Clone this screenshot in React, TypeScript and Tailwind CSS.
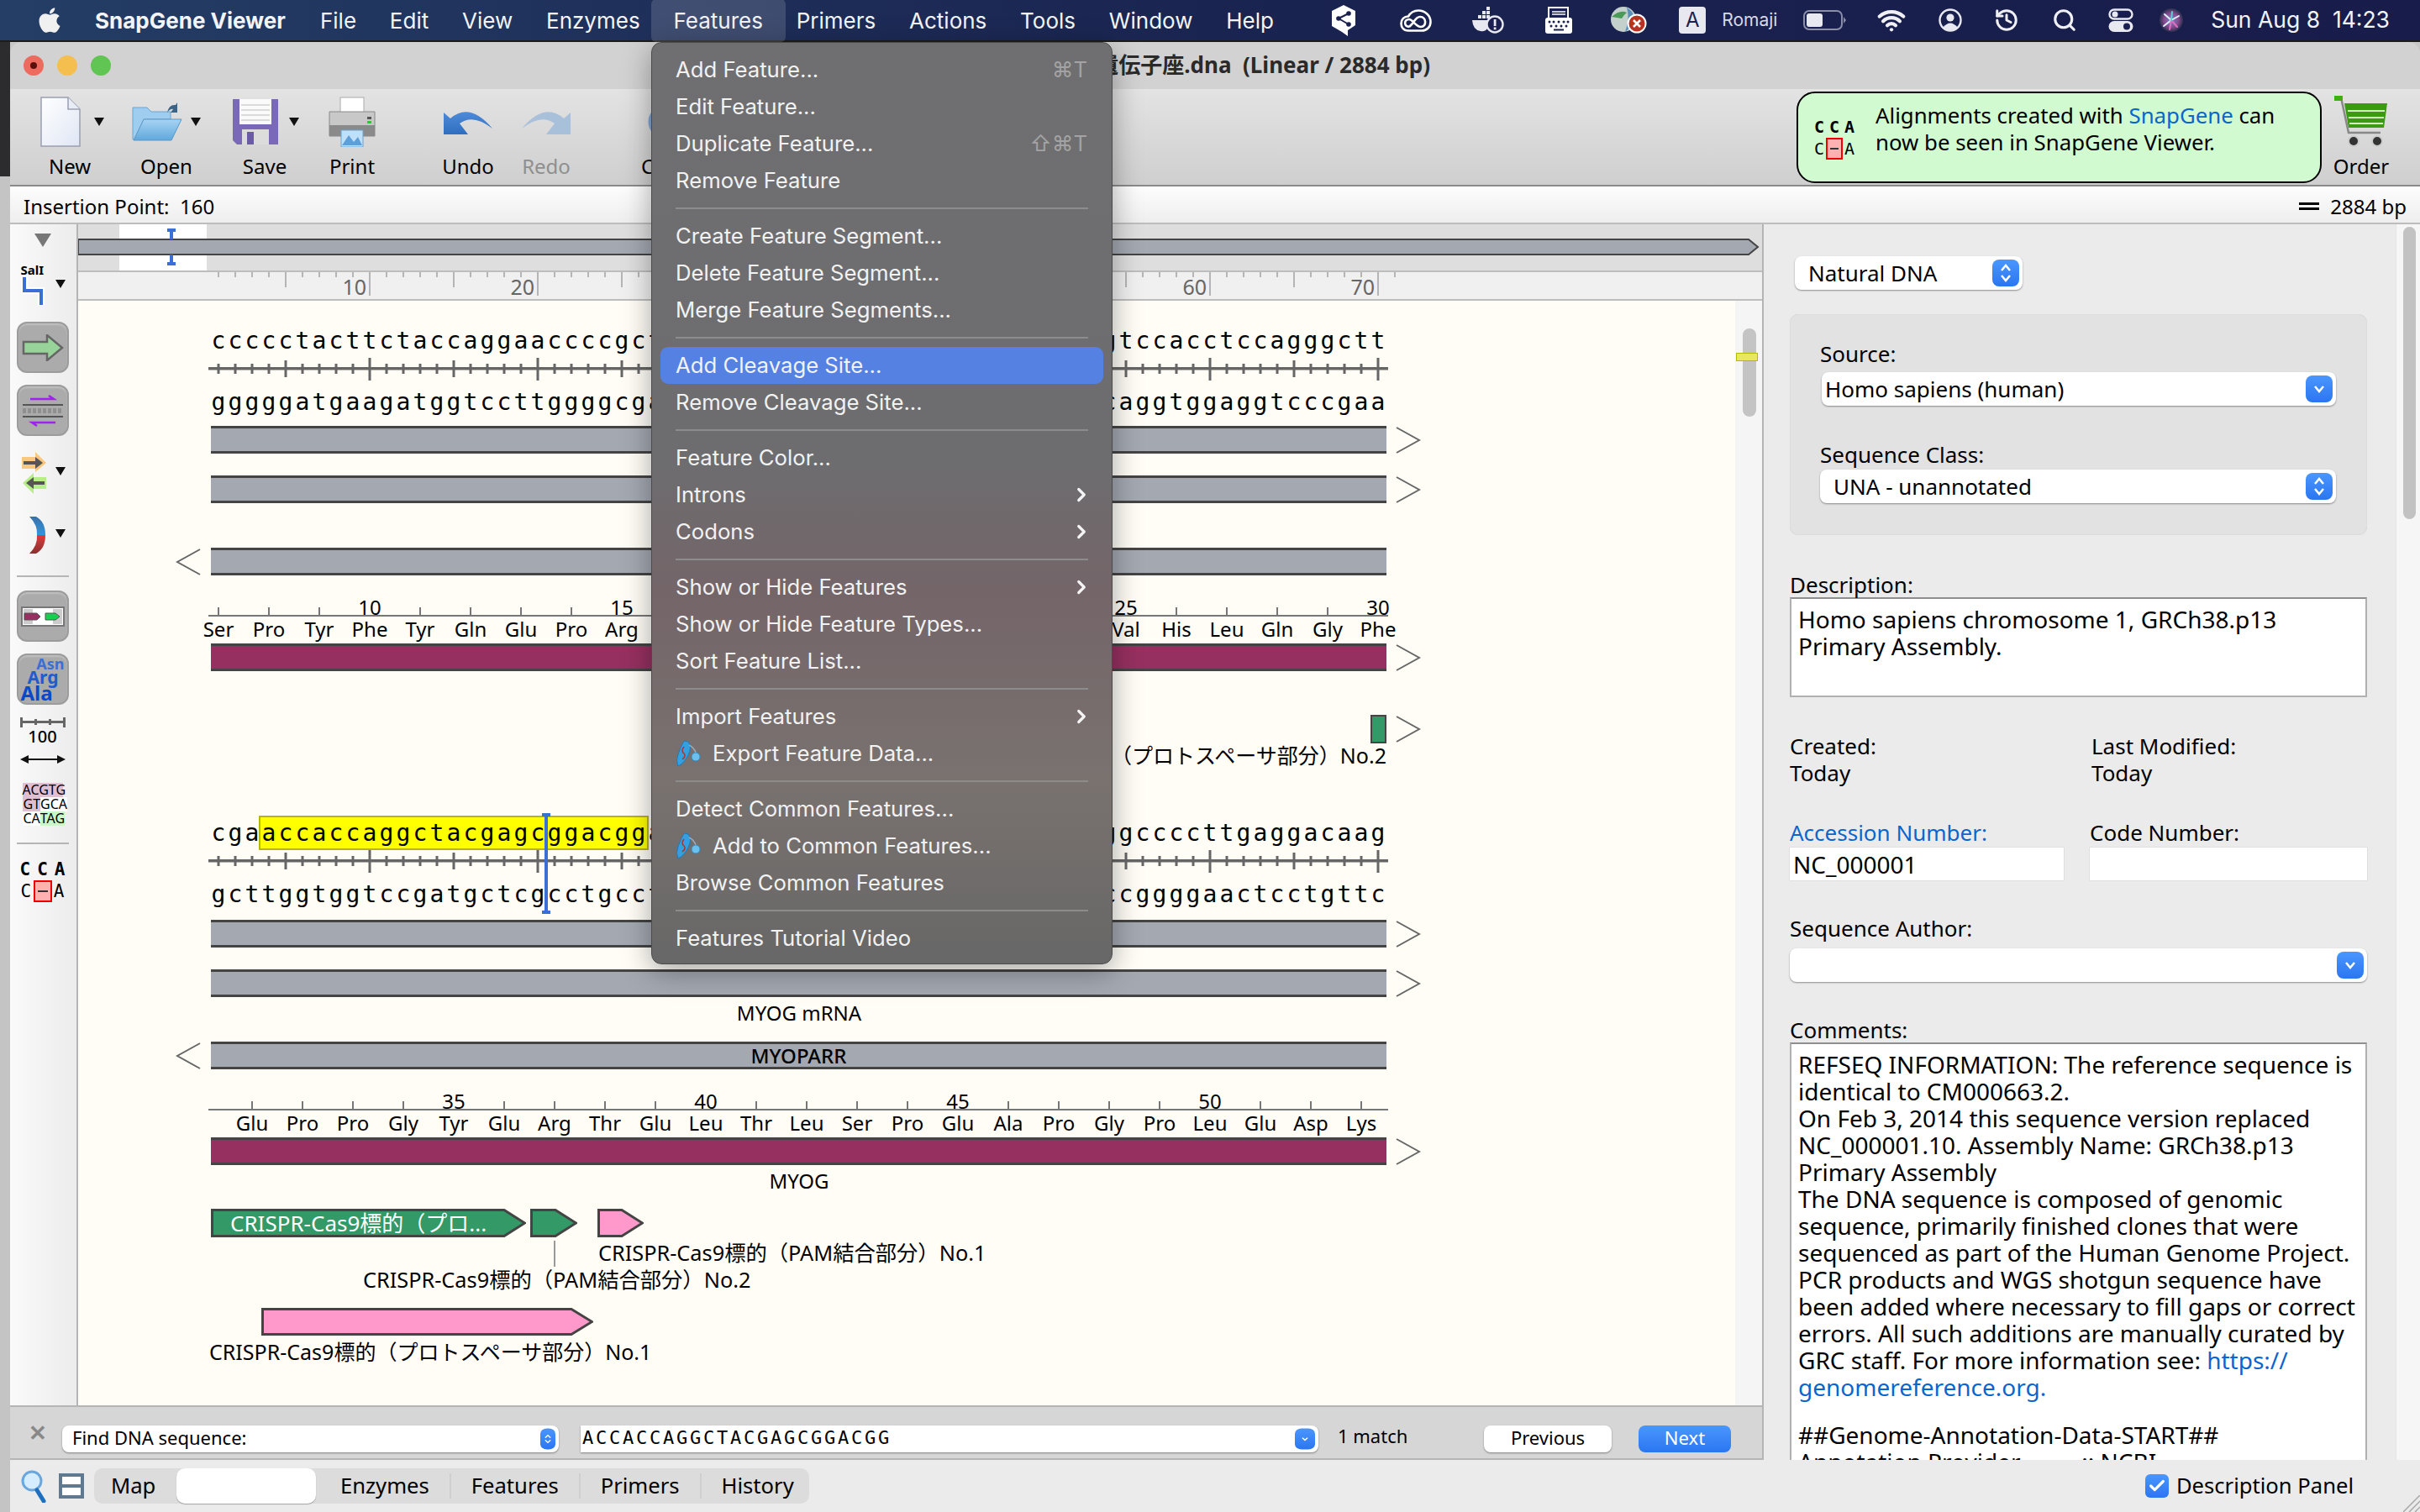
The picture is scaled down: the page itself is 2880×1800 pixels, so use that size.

import React from "react";
import { FaApple } from "react-icons/fa";
import { Wifi, Search, History, ChevronRight, Check } from "lucide-react";

const CELL = "w-[20px] text-center shrink-0";
const MONO = "font-['DejaVu_Sans_Mono','Liberation_Mono',monospace]";
const comp: Record<string, string> = { a: "t", t: "a", g: "c", c: "g" };
const complement = (s: string) => s.split("").map((c) => comp[c]).join("");

const TOP1 = "ccccctacttctaccaggaaccccgc" + "tgagctacctgcaaccgtccctatgcc" + "gtccacctccagggctt";
const TOP2 = "cgaaccaccaggctacgagcggacgg" + "agctgaagcgcaagaccaccaatgctg" + "ggccccttgaggacaag";

function Chars({ s }: { s: string }) {
  return (
    <>
      {s.split("").map((c, i) => (
        <span key={i} className={CELL}>{c}</span>
      ))}
    </>
  );
}

function SeqLine({ s, highlight }: { s: string; highlight?: boolean }) {
  if (highlight) {
    return (
      <div className={`flex h-[41px] items-center pl-[157px] text-[28px] text-black ${MONO}`}>
        <Chars s={s.slice(0, 3)} />
        <div className="-mx-[2px] flex h-[41px] items-center bg-[#ffff00] px-[2px] outline-2 -outline-offset-2 outline-[#b8b800]">
          <Chars s={s.slice(3, 26)} />
        </div>
        <Chars s={s.slice(26)} />
      </div>
    );
  }
  return (
    <div className={`flex h-[40px] items-center pl-[157px] text-[28px] text-black ${MONO}`}>
      <Chars s={s} />
    </div>
  );
}

function Ticks() {
  const items = Array.from({ length: 70 }, (_, i) => i + 1);
  return (
    <svg width="1404" height="28" className="ml-[155px] block">
      <rect x="0" y="11" width="1404" height="3.5" fill="#666" />
      {items.map((n) => {
        const x = 12 + (n - 1) * 20;
        const h = n % 10 === 0 ? 14 : n % 5 === 0 ? 10 : 6;
        return <rect key={n} x={x - 1.5} y={13 - h} width="3" height={h * 2} fill="#666" />;
      })}
    </svg>
  );
}

function Chev({ left, y = 32 }: { left?: boolean; y?: number }) {
  return (
    <svg width="30" height={y} viewBox={`0 0 30 ${y}`} className="shrink-0">
      {left ? (
        <polyline points={`29,1 2,${y / 2} 29,${y - 1}`} fill="none" stroke="#666" strokeWidth="2" />
      ) : (
        <polyline points={`1,1 28,${y / 2} 1,${y - 1}`} fill="none" stroke="#666" strokeWidth="2" />
      )}
    </svg>
  );
}

function Bar({
  color = "bg-[#a3a8b1]",
  left,
  right,
  label,
  className = "",
}: {
  color?: string;
  left?: boolean;
  right?: boolean;
  label?: string;
  className?: string;
}) {
  return (
    <div className={`flex h-[33px] items-center pl-[116px] ${className}`}>
      <div className="w-[30px] shrink-0">{left && <Chev left />}</div>
      <div className="w-[12px] shrink-0" />
      <div className={`flex h-[33px] w-[1399px] shrink-0 items-center justify-center border-y-[3px] border-[#444] text-[24px] font-medium text-black ${color}`}>
        {label}
      </div>
      <div className="w-[11px] shrink-0" />
      {right && <Chev />}
    </div>
  );
}

function AminoRow({ names, start, nums }: { names: string[]; start: number; nums: Record<number, string> }) {
  return (
    <div>
      <div className="h-[20px] w-[1404px] ml-[155px]">
        <svg width="1404" height="20" className="block">
          <rect x="0" y="18" width="1404" height="2" fill="#777" />
          {names.map((_, i) =>
            nums[start + i * 60] ? null : (
              <rect key={i} x={start + i * 60 - 248 - 1} y="9" width="2" height="10" fill="#777" />
            )
          )}
        </svg>
      </div>
      <div className="relative">
        {Object.entries(nums).map(([k, v]) => (
          <span key={k} className="absolute top-[-25px] w-[60px] text-center text-[24px] leading-[28px] text-black" style={{ left: Number(k) - 30 - 93 }}>
            {v}
          </span>
        ))}
      </div>
      <div className="flex h-[29px] items-center text-[24px] text-black" style={{ paddingLeft: start - 30 - 93 }}>
        {names.map((n, i) => (
          <span key={i} className="w-[60px] shrink-0 text-center">{n}</span>
        ))}
      </div>
    </div>
  );
}

function Caret({ className = "" }: { className?: string }) {
  return (
    <svg width="12" height="10" viewBox="0 0 12 10" className={className}>
      <polygon points="0,0 12,0 6,10" fill="#111" />
    </svg>
  );
}

function ToolItem({ label, icon, caret, muted, className = "" }: { label: string; icon: React.ReactNode; caret?: boolean; muted?: boolean; className?: string }) {
  return (
    <div className={`flex w-[86px] shrink-0 flex-col items-center ${className}`}>
      <div className="flex h-[62px] items-center justify-center">
        <div className="flex h-[62px] w-[60px] items-center justify-center">{icon}</div>
        {caret && <div className="flex w-[22px] justify-end"><Caret /></div>}
      </div>
      <div className={`mt-[7px] text-[24px] leading-[30px] ${muted ? "text-[#8f8f8f]" : "text-black"}`}>{label}</div>
    </div>
  );
}

function Cca({ big }: { big?: boolean }) {
  return big ? (
    <div className={`flex w-[56px] flex-col items-center text-[21px] leading-[26px] text-black ${MONO}`}>
      <div className="flex w-full justify-between px-[1px] font-bold"><span>C</span><span>C</span><span>A</span></div>
      <div className="flex w-full items-center justify-between">
        <span className="ml-[2px]">C</span>
        <span className="flex h-[26px] w-[22px] items-center justify-center border-2 border-[#f00000] bg-[#ffb0b0]"><span className="h-[2px] w-[12px] bg-[#333]" /></span>
        <span className="mr-[2px]">A</span>
      </div>
    </div>
  ) : (
    <div className={`flex w-[48px] flex-col items-center text-[20px] leading-[26px] text-black ${MONO}`}>
      <div className="flex w-full justify-between font-bold"><span>C</span><span>C</span><span>A</span></div>
      <div className="flex w-full items-center justify-between">
        <span>C</span>
        <span className="flex h-[26px] w-[20px] items-center justify-center border-2 border-[#f00000] bg-[#ffb0b0]"><span className="h-[2px] w-[10px] bg-[#333]" /></span>
        <span>A</span>
      </div>
    </div>
  );
}

function ToolButton({ children, className = "" }: { children: React.ReactNode; className?: string }) {
  return (
    <div className={`flex h-[61px] w-[62px] items-center justify-center rounded-[12px] border-2 border-[#9c9c9c] bg-[#ababab] shadow-[inset_0_2px_2px_rgba(255,255,255,0.25)] ${className}`}>
      {children}
    </div>
  );
}

function LeftTools() {
  return (
    <div className="flex w-[81px] shrink-0 flex-col items-center border-r-2 border-[#b4b4b4] bg-gradient-to-r from-[#fafafa] to-[#ececec] pr-[2px]">
      <svg width="20" height="16" viewBox="0 0 20 16" className="mt-[11px]"><polygon points="0,0 20,0 10,16" fill="#777" /></svg>
      <div className="relative mt-[20px] h-[50px] w-[62px]">
        <div className="ml-[5px] text-[15px] font-bold leading-[15px] text-black">SalI</div>
        <svg width="30" height="34" viewBox="0 0 30 34" className="ml-[5px] mt-[1px] block">
          <polyline points="4,0 4,16 24,16 24,34" fill="none" stroke="#fff" strokeWidth="8" />
          <polyline points="4,0 4,16 24,16 24,33" fill="none" stroke="#3b6fd6" strokeWidth="4" />
        </svg>
        <Caret className="absolute left-[46px] top-[19px]" />
      </div>
      <ToolButton className="mt-[19px]">
        <svg width="50" height="32" viewBox="0 0 50 32"><polygon points="2,9 30,9 30,1 48,16 30,31 30,23 2,23" fill="#98d49a" stroke="#666" strokeWidth="2.5" /></svg>
      </ToolButton>
      <ToolButton className="mt-[14px]">
        <svg width="50" height="40" viewBox="0 0 50 40">
          <path d="M10 6 H38 L32 2" fill="none" stroke="#a020f0" strokeWidth="2.5" />
          <path d="M40 34 H12 L18 38" fill="none" stroke="#a020f0" strokeWidth="2.5" />
          <rect x="1" y="12" width="48" height="2" fill="#555" />
          <rect x="1" y="26" width="48" height="2" fill="#555" />
          <line x1="1" y1="20" x2="49" y2="20" stroke="#8f8f8f" strokeWidth="6" strokeDasharray="4 2" />
        </svg>
      </ToolButton>
      <div className="relative mt-[19px] h-[50px] w-[62px]">
        <svg width="30" height="50" viewBox="0 0 30 50" className="ml-[6px]">
          <polygon points="0,6 16,6 16,0 29,13 16,24 16,20 0,20" fill="#f9c77e" />
          <polygon points="2,11 16,11 16,6 25,13 16,20 16,15 2,15" fill="#555" />
          <polygon points="29,30 14,30 14,25 1,37 14,50 14,44 29,44" fill="#b8ee8a" />
          <polygon points="27,35 14,35 14,30 5,37 14,44 14,39 27,39" fill="#555" />
        </svg>
        <Caret className="absolute left-[46px] top-[18px]" />
      </div>
      <div className="relative mt-[27px] h-[43px] w-[62px]">
        <svg width="22" height="44" viewBox="0 0 22 44" className="ml-[15px]">
          <defs>
            <linearGradient id="cb" x1="0" y1="0" x2="0" y2="1"><stop offset="0" stopColor="#3b6ea8" /><stop offset="1" stopColor="#2e97dc" /></linearGradient>
            <linearGradient id="cr" x1="0" y1="0" x2="0" y2="1"><stop offset="0" stopColor="#e03a3a" /><stop offset="1" stopColor="#8a2f2f" /></linearGradient>
          </defs>
          <path d="M0 0 H8 Q19 6 19 22 H9 Q10 10 0 0Z" fill="url(#cb)" />
          <path d="M9 22 H19 Q19 38 8 44 H0 Q10 34 9 22Z" fill="url(#cr)" />
        </svg>
        <Caret className="absolute left-[46px] top-[15px]" />
      </div>
      <div className="mt-[27px] h-[2px] w-[62px] bg-[#b5b5b5]" />
      <ToolButton className="mt-[16px] h-[60px]">
        <svg width="52" height="24" viewBox="0 0 52 24">
          <rect x="1" y="1" width="50" height="22" fill="#fff" stroke="#777" strokeWidth="2" />
          <rect x="3" y="3" width="11" height="18" fill="#ccc" /><rect x="38" y="3" width="11" height="18" fill="#ccc" />
          <polygon points="4,8 19,8 23,12 19,16 4,16" fill="#963060" stroke="#555" />
          <polygon points="29,8 41,8 46,12 41,16 29,16" fill="#18d050" stroke="#555" />
        </svg>
      </ToolButton>
      <ToolButton className="mt-[14px] h-[60px]">
        <div className="flex w-[52px] flex-col font-bold">
          <span className="self-end text-[18px] leading-[15px] text-[#3b6fd6]">Asn</span>
          <span className="ml-[8px] text-[21px] leading-[17px] text-[#1e5cd0]">Arg</span>
          <span className="text-[24px] leading-[20px] text-[#0a48cc]">Ala</span>
        </div>
      </ToolButton>
      <div className="mt-[15px] flex h-[34px] w-[62px] flex-col items-center">
        <svg width="54" height="12" viewBox="0 0 54 12">
          <rect x="0" y="4" width="54" height="3" fill="#666" />
          <rect x="0" y="0" width="3" height="12" fill="#666" /><rect x="51" y="0" width="3" height="12" fill="#666" />
          <rect x="17" y="2" width="3" height="7" fill="#666" /><rect x="34" y="2" width="3" height="7" fill="#666" />
        </svg>
        <span className="mt-[1px] text-[20px] font-medium leading-[20px] text-black">100</span>
      </div>
      <svg width="54" height="12" viewBox="0 0 54 12" className="mt-[10px]">
        <rect x="6" y="5" width="42" height="2" fill="#111" />
        <polygon points="0,6 10,1 10,11" fill="#111" /><polygon points="54,6 44,1 44,11" fill="#111" />
      </svg>
      <div className="mt-[22px] flex w-[48px] flex-col text-[16px] leading-[17px] text-black">
        <div className="bg-[#e0bfd2] text-center">ACGTG</div>
        <div className="flex"><span className="bg-[#e0bfd2] pl-[1px]">GT</span><span className="flex-1 bg-white text-center">GCA</span></div>
        <div className="flex"><span className="bg-white pl-[1px]">CA</span><span className="flex-1 bg-[#c8f8c8] text-center">TAG</span></div>
      </div>
      <div className="mt-[20px] h-[2px] w-[62px] bg-[#b5b5b5]" />
      <div className="mt-[17px]"><Cca big /></div>
    </div>
  );
}

function Overview() {
  return (
    <div className="relative h-[55px] shrink-0 bg-[#dedede]">
      <div className="absolute left-[49px] top-0 h-[55px] w-[104px] bg-white" />
      <svg width="2004" height="55" className="absolute left-0 top-0">
        <polygon points="0,18 1988,18 1999,27 1988,36 0,36" fill="#a3a8b1" stroke="#444" strokeWidth="2" />
        <path d="M106 7 H116 M111 7 V18 M111 36 V47 M106 47 H116" stroke="#3b6fd6" strokeWidth="4" fill="none" />
      </svg>
    </div>
  );
}

function Ruler() {
  const items = Array.from({ length: 71 }, (_, i) => i + 1);
  return (
    <div className="h-[36px] shrink-0 border-y-2 border-[#bdbdbd] bg-[#f0f0f0]">
      <svg width="2004" height="32" className="block">
        {items.map((n) => {
          const x = 260 + (n - 1) * 20 - 93;
          const h = n % 10 === 0 ? 28 : n % 5 === 0 ? 18 : 6;
          return <rect key={n} x={x - 1} y="0" width="2" height={h} fill="#b5b5b5" />;
        })}
        {[10, 20, 30, 40, 50, 60, 70].map((n) => (
          <text key={n} x={260 + (n - 1) * 20 - 93 - 4} y="27" textAnchor="end" fontSize="25" fill="#666" fontFamily="Noto Sans, sans-serif">{n}</text>
        ))}
      </svg>
    </div>
  );
}

function FeatureArrow({ w, h = 34, point, fill, children }: { w: number; h?: number; point: number; fill: string; children?: React.ReactNode }) {
  return (
    <div className="relative shrink-0" style={{ width: w, height: h }}>
      <svg width={w} height={h} className="block">
        <polygon points={`1.5,1.5 ${w - point},1.5 ${w - 1.5},${h / 2} ${w - point},${h - 1.5} 1.5,${h - 1.5}`} fill={fill} stroke="#444" strokeWidth="3" />
      </svg>
      {children}
    </div>
  );
}

function Canvas() {
  const aa1 = ["Ser", "Pro", "Tyr", "Phe", "Tyr", "Gln", "Glu", "Pro", "Arg", "Ile", "Thr", "Glu", "Leu", "Ala", "Gly", "Phe", "Leu", "Tyr", "Val", "His", "Leu", "Gln", "Gly", "Phe"];
  const aa2 = ["Glu", "Pro", "Pro", "Gly", "Tyr", "Glu", "Arg", "Thr", "Glu", "Leu", "Thr", "Leu", "Ser", "Pro", "Glu", "Ala", "Pro", "Gly", "Pro", "Leu", "Glu", "Asp", "Lys"];
  return (
    <div className="relative h-[1315px] w-[1972px] shrink-0 overflow-hidden bg-[#fffdf6]">
      {/* first block */}
      <div className="pt-[28px]">
        <SeqLine s={TOP1} />
        <Ticks />
        <div className="mt-[5px]"><SeqLine s={complement(TOP1)} /></div>
        <Bar right className="mt-[8px]" />
        <Bar right className="mt-[26px]" />
        <Bar left className="mt-[53px]" />
        <div className="mt-[29px]">
          <AminoRow names={aa1} start={260} nums={{ 440: "10", 740: "15", 1040: "20", 1340: "25", 1640: "30" }} />
        </div>
        <Bar color="bg-[#963060]" right className="mt-[3px]" />
        <div className="mt-[52px] flex h-[34px] items-center pl-[1538px]">
          <div className="h-[34px] w-[19px] border-2 border-[#444] bg-[#339966]" />
          <div className="ml-[11px]"><Chev /></div>
        </div>
        <div className="flex h-[30px] items-center justify-end pr-[415px] text-[25px] text-black">
          CRISPR-Cas9標的（プロトスペーサ部分）No.2
        </div>
      </div>
      {/* second block */}
      <div className="relative mt-[56px]">
        <SeqLine s={TOP2} highlight />
        <Ticks />
        <div className="mt-[5px]"><SeqLine s={complement(TOP2)} /></div>
        <svg width="10" height="120" className="absolute left-[552px] top-[-3px]">
          <path d="M0 2 H10 M5 2 V118 M0 118 H10" stroke="#3b6fd6" strokeWidth="4" fill="none" />
        </svg>
        <Bar right className="mt-[10px]" />
        <Bar right className="mt-[26px]" />
        <div className="flex h-[53px] items-center pb-[16px] pl-[758px] text-[24px] text-black">
          <span className="ml-[100px] -translate-x-1/2 whitespace-nowrap">MYOG mRNA</span>
        </div>
        <Bar left label="MYOPARR" />
        <div className="mt-[29px]">
          <AminoRow names={aa2} start={300} nums={{ 540: "35", 840: "40", 1140: "45", 1440: "50" }} />
        </div>
        <Bar color="bg-[#963060]" right className="mt-[3px]" />
        <div className="flex h-[38px] items-center pl-[758px] text-[24px] text-black">
          <span className="ml-[100px] -translate-x-1/2">MYOG</span>
        </div>
        {/* free annotated features */}
        <div className="relative mt-[14px] h-[190px]">
          <div className="absolute left-[158px] top-0"><FeatureArrow w={375} point={26} fill="#339966"><span className="absolute left-[23px] top-0 flex h-[34px] items-center text-[26px] whitespace-nowrap text-white">CRISPR-Cas9標的（プロ...</span></FeatureArrow></div>
          <div className="absolute left-[538px] top-0"><FeatureArrow w={56} point={26} fill="#339966" /></div>
          <div className="absolute left-[618px] top-0"><FeatureArrow w={55} point={26} fill="#ff99cc" /></div>
          <div className="absolute left-[619px] top-[36px] text-[25.3px] leading-[32px] whitespace-nowrap text-black">CRISPR-Cas9標的（PAM結合部分）No.1</div>
          <div className="absolute left-[566px] top-[38px] h-[31px] w-[2px] bg-[#999]" />
          <div className="absolute left-[339px] top-[68px] text-[25.3px] leading-[32px] whitespace-nowrap text-black">CRISPR-Cas9標的（PAM結合部分）No.2</div>
          <div className="absolute left-[218px] top-[118px]"><FeatureArrow w={395} h={33} point={26} fill="#ff99cc" /></div>
          <div className="absolute left-[156px] top-[154px] text-[25px] leading-[32px] whitespace-nowrap text-black">CRISPR-Cas9標的（プロトスペーサ部分）No.1</div>
        </div>
      </div>
    </div>
  );
}

function Updown({ small }: { small?: boolean }) {
  return (
    <div className={`flex shrink-0 items-center justify-center rounded-[8px] bg-gradient-to-b from-[#4a96ff] to-[#2a76f0] ${small ? "h-[32px] w-[18px]" : "h-[32px] w-[32px]"}`}>
      <svg width="16" height="24" viewBox="0 0 16 24" fill="none" stroke="#fff" strokeWidth="2.5" className={small ? "w-[10px]" : ""}>
        <path d="M3 9 L8 3 L13 9" /><path d="M3 15 L8 21 L13 15" />
      </svg>
    </div>
  );
}

function Down({ small }: { small?: boolean }) {
  return (
    <div className={`flex h-[32px] shrink-0 items-center justify-center rounded-[8px] bg-gradient-to-b from-[#4a96ff] to-[#2a76f0] ${small ? "w-[24px]" : "w-[32px]"}`}>
      <svg width="16" height="10" viewBox="0 0 16 10" fill="none" stroke="#fff" strokeWidth="2.5" className={small ? "w-[10px]" : ""}>
        <path d="M3 2 L8 8 L13 2" />
      </svg>
    </div>
  );
}

function SelectBox({ text, className = "", children, pad = "pl-[4px]" }: { text: string; className?: string; children: React.ReactNode; pad?: string }) {
  return (
    <div className={`flex h-[40px] items-center justify-between rounded-[8px] bg-white pr-[4px] shadow-[0_1px_2px_rgba(0,0,0,0.4)] ${pad} ${className}`}>
      <span className="text-[26px] leading-[32px] text-black">{text}</span>
      {children}
    </div>
  );
}

const COMMENTS = [
  "REFSEQ INFORMATION: The reference sequence is",
  "identical to CM000663.2.",
  "On Feb 3, 2014 this sequence version replaced",
  "NC_000001.10. Assembly Name: GRCh38.p13",
  "Primary Assembly",
  "The DNA sequence is composed of genomic",
  "sequence, primarily finished clones that were",
  "sequenced as part of the Human Genome Project.",
  "PCR products and WGS shotgun sequence have",
  "been added where necessary to fill gaps or correct",
  "errors. All such additions are manually curated by",
];

function RightPanel() {
  return (
    <div className="flex h-[1471px] w-[783px] shrink-0 border-l-2 border-[#b4b4b4] bg-[#ebebeb]">
      <div className="h-[1471px] w-[752px] shrink-0 overflow-hidden pl-[31px] text-[26px] leading-[32px] text-black">
        <SelectBox text="Natural DNA" pad="pl-[16px]" className="ml-[6px] mt-[38px] w-[271px]"><Updown /></SelectBox>
        <div className="mt-[29px] h-[263px] w-[687px] rounded-[10px] bg-[#e2e2e2] pl-[36px] pt-[31px] shadow-[inset_0_0_1px_rgba(0,0,0,0.2)]">
          <div>Source:</div>
          <SelectBox text="Homo sapiens (human)" className="ml-[2px] mt-[6px] w-[612px]"><Down /></SelectBox>
          <div className="mt-[42px]">Sequence Class:</div>
          <SelectBox text="UNA - unannotated" pad="pl-[16px]" className="mt-[2px] w-[614px]"><Updown /></SelectBox>
        </div>
        <div className="mt-[43px]">Description:</div>
        <div className="h-[119px] w-[687px] border-2 border-[#b0b0b0] border-t-[#8e8e8e] bg-white pl-[8px] pt-[8px] text-[28px] -mt-[1px]">
          <div>Homo sapiens chromosome 1, GRCh38.p13</div>
          <div>Primary Assembly.</div>
        </div>
        <div className="mt-[42px] flex">
          <div className="w-[359px]"><div>Created:</div><div>Today</div></div>
          <div><div>Last Modified:</div><div>Today</div></div>
        </div>
        <div className="mt-[39px] flex">
          <div className="w-[357px]">
            <div className="text-[#0a66cc]">Accession Number:</div>
            <div className="mt-[2px] flex h-[39px] w-[326px] items-center bg-white pl-[4px] text-[28px] shadow-[0_0_1px_rgba(0,0,0,0.3)]">NC_000001</div>
          </div>
          <div>
            <div>Code Number:</div>
            <div className="mt-[2px] h-[39px] w-[330px] bg-white shadow-[0_0_1px_rgba(0,0,0,0.3)]" />
          </div>
        </div>
        <div className="mt-[41px]">Sequence Author:</div>
        <SelectBox text="" className="mt-[8px] w-[687px]"><Down /></SelectBox>
        <div className="mt-[41px]">Comments:</div>
        <div className="-mt-[1px] w-[687px] border-x-2 border-t-2 border-[#b0b0b0] border-t-[#8e8e8e] bg-white pl-[8px] pt-[8px] text-[28px] whitespace-nowrap">
          {COMMENTS.map((c) => <div key={c}>{c}</div>)}
          <div>GRC staff. For more information see: <span className="text-[#0a66cc]">https://</span></div>
          <div className="text-[#0a66cc]">genomereference.org.</div>
          <div className="h-[25px]" />
          <div>##Genome-Annotation-Data-START##</div>
          <div className="whitespace-pre">Annotation Provider          :: NCBI</div>
        </div>
      </div>
      <div className="h-[1471px] flex-1 border-l border-[#e4e4e4] bg-[#f6f6f6] pl-[8px] pt-[3px]">
        <div className="h-[348px] w-[15px] rounded-full bg-[#c2c2c2]" />
      </div>
    </div>
  );
}

function FindBar() {
  return (
    <div className="flex h-[65px] shrink-0 items-center border-y-2 border-[#b5b5b5] bg-[#d6d6d6] pt-[15px] text-[22px] text-black">
      <span className="-mt-[16px] ml-[22px] w-[40px] text-[26px] font-bold leading-none text-[#888]">✕</span>
      <div className="flex h-[32px] w-[591px] items-center justify-between rounded-[8px] bg-white pl-[12px] pr-[4px] shadow-[0_1px_2px_rgba(0,0,0,0.4)]">
        <span className="-mt-[3px]">Find DNA sequence:</span>
        <div className="scale-y-[0.78]"><Updown small /></div>
      </div>
      <div className="ml-[26px] flex h-[32px] w-[878px] items-center justify-between rounded-r-[8px] bg-white pl-[2px] pr-[4px] shadow-[0_1px_2px_rgba(0,0,0,0.4)]">
        <span className={`-mt-[4px] text-[22px] tracking-[2.76px] ${MONO}`}>ACCACCAGGCTACGAGCGGACGG</span>
        <div className="scale-y-[0.78]"><Down small /></div>
      </div>
      <span className="-mt-[7px] ml-[23px] w-[174px]">1 match</span>
      <div className="flex h-[32px] w-[152px] items-center justify-center rounded-[8px] bg-white shadow-[0_1px_2px_rgba(0,0,0,0.4)]"><span className="-mt-[3px]">Previous</span></div>
      <div className="ml-[32px] flex h-[32px] w-[110px] items-center justify-center rounded-[8px] bg-gradient-to-b from-[#4a96ff] to-[#2a76f0] text-white"><span className="-mt-[3px]">Next</span></div>
    </div>
  );
}

function BottomBar() {
  const sep = "mx-[24px] h-[30px] w-[2px] bg-[#cfcfcf]";
  return (
    <div className="relative flex h-[62px] shrink-0 items-center bg-[#ebebeb] text-[25.6px] text-black">
      <svg width="32" height="40" viewBox="0 0 32 40" className="ml-[13px]">
        <circle cx="13" cy="14" r="11" fill="#d6ecff" stroke="#6aa7dd" strokeWidth="3" />
        <line x1="19" y1="25" x2="27" y2="38" stroke="#1f6fc0" strokeWidth="5" strokeLinecap="round" />
      </svg>
      <div className="ml-[13px] flex h-[30px] w-[30px] flex-col justify-center gap-[4px] bg-[#5f7a90] px-[4px]">
        <div className="h-[9px] bg-white" /><div className="h-[9px] bg-white" />
      </div>
      <div className="ml-[12px] flex h-[42px] w-[851px] items-center rounded-[10px] bg-[#dcdcdc] pl-[20px]">
        <span className="w-[78px]">Map</span>
        <div className="h-[42px] w-[166px] rounded-[10px] bg-white shadow-[0_1px_1px_rgba(0,0,0,0.3)]" />
        <span className="ml-[29px]">Enzymes</span><span className={sep} />
        <span>Features</span><span className={sep} />
        <span>Primers</span><span className={sep} />
        <span>History</span>
      </div>
      <div className="flex-1" />
      <div className="flex h-[28px] w-[28px] items-center justify-center rounded-[6px] bg-gradient-to-b from-[#4a96ff] to-[#2a76f0]"><Check size={22} color="#fff" strokeWidth={3.5} /></div>
      <span className="ml-[9px]">Description Panel</span>
      <div className="w-[79px]" />
      <svg width="20" height="20" viewBox="0 0 20 20" className="absolute bottom-0 right-0" stroke="#a8a8a8" strokeWidth="1.5">
        <line x1="0" y1="20" x2="20" y2="0" /><line x1="7" y1="20" x2="20" y2="7" /><line x1="14" y1="20" x2="20" y2="14" />
      </svg>
    </div>
  );
}

const MENU: (string | { t: string; k?: string; sub?: boolean; gel?: boolean; on?: boolean })[] = [
  { t: "Add Feature...", k: "⌘T" },
  { t: "Edit Feature..." },
  { t: "Duplicate Feature...", k: "⇧⌘T" },
  { t: "Remove Feature" },
  "-",
  { t: "Create Feature Segment..." },
  { t: "Delete Feature Segment..." },
  { t: "Merge Feature Segments..." },
  "-",
  { t: "Add Cleavage Site...", on: true },
  { t: "Remove Cleavage Site..." },
  "-",
  { t: "Feature Color..." },
  { t: "Introns", sub: true },
  { t: "Codons", sub: true },
  "-",
  { t: "Show or Hide Features", sub: true },
  { t: "Show or Hide Feature Types..." },
  { t: "Sort Feature List..." },
  "-",
  { t: "Import Features", sub: true },
  { t: "Export Feature Data...", gel: true },
  "-",
  { t: "Detect Common Features..." },
  { t: "Add to Common Features...", gel: true },
  { t: "Browse Common Features" },
  "-",
  { t: "Features Tutorial Video" },
];

function Gel() {
  return (
    <svg width="30" height="32" viewBox="0 0 30 32" className="mr-[14px] shrink-0">
      <path d="M10 1 L15 2 Q20 8 15 18 Q10 28 3 31 Q0 25 3 17 Q6 8 10 1Z" fill="#35a0e0" stroke="#1f78b8" />
      <path d="M10 8 Q6 13 10 16 Q13 19 8 23" fill="none" stroke="#b03030" strokeWidth="1.5" />
      <circle cx="24" cy="20" r="5" fill="#6cc0ee" stroke="#2f8cc6" />
      <path d="M16 6 Q22 9 24 15" fill="none" stroke="#9ab" strokeWidth="1.5" />
    </svg>
  );
}

function FeaturesMenu() {
  return (
    <div className="absolute left-[775px] top-[50px] h-[1098px] w-[549px] rounded-[12px] border border-[#4b4b4b] bg-[linear-gradient(to_bottom,#6f6f71_0%,#6d6d6f_45%,#746569_60%,#79726f_80%,#676767_100%)] px-[10px] pt-[10px] font-['Inter',sans-serif] text-[25.7px] text-[#f2f2f2] shadow-[0_8px_34px_rgba(0,0,0,0.35)]">
      {MENU.map((m, i) =>
        typeof m === "string" ? (
          <div key={i} className="flex h-[22px] items-center px-[18px]"><div className="h-[2px] w-full bg-[#8c8c8c]" /></div>
        ) : (
          <div key={i} className={`flex h-[44px] items-center justify-between rounded-[9px] pl-[18px] pr-[19px] ${m.on ? "bg-[#5481e2]" : ""}`}>
            <span className="flex items-center">{m.gel && <Gel />}{m.t}</span>
            {m.k && <span className="text-[#a3a3a3]">{m.k}</span>}
            {m.sub && <ChevronRight size={26} strokeWidth={3} color="#f4f4f4" className="-mr-[6px]" />}
          </div>
        )
      )}
    </div>
  );
}

function Slot({ w, children }: { w: string; children: React.ReactNode }) {
  return <div className={`flex shrink-0 items-center justify-center ${w}`}>{children}</div>;
}

function MenuBar() {
  return (
    <div className="flex h-[48px] shrink-0 items-center bg-gradient-to-r from-[#243e66] via-[#1a2450] to-[#181c4a] font-['Inter',sans-serif] text-[26px] text-[#f2f4f8]">
      <FaApple size={34} color="#f0f0f0" className="ml-[42px]" />
      <span className="ml-[37px] font-bold">SnapGene Viewer</span>
      <div className="ml-[41px] flex gap-[39.8px]">
        <span>File</span><span>Edit</span><span>View</span><span>Enzymes</span>
        <span className="relative">
          <span className="absolute left-[-26px] right-[-27px] top-[-6px] bottom-[-6px] rounded-[6px] bg-white/15" />
          <span className="relative">Features</span>
        </span>
        <span>Primers</span><span>Actions</span><span>Tools</span><span>Window</span><span>Help</span>
      </div>
      <div className="flex-1" />
      <Slot w="w-[85px]">
        <svg width="30" height="37" viewBox="0 0 30 37">
          <path d="M15 0 L29 7 V24 L20 30 L20 37 L13 32 L1 25 V7Z" fill="#fff" />
          <path d="M9 16 L21 10 M9 16 L21 23" stroke="#1a1f4f" strokeWidth="2" />
          <circle cx="9" cy="16" r="2.8" fill="#1a1f4f" /><circle cx="21" cy="10" r="2.8" fill="#1a1f4f" /><circle cx="21" cy="23" r="2.8" fill="#1a1f4f" />
        </svg>
      </Slot>
      <Slot w="w-[87px]">
        <svg width="38" height="27" viewBox="0 0 38 27" fill="none" stroke="#fff" strokeWidth="2.6">
          <path d="M10 25.5 C4 25.5 1.5 21 1.5 17 C1.5 12 5 8.5 10 8.5 C13 3.5 17 1.5 22 1.5 C30 1.5 36.5 7.5 36.5 15 C36.5 21 32 25.5 26 25.5Z" />
          <path d="M11 21 C4 20 5 12 11 12 C15 12 19 21 25 21 C32 21 32 9 24 9 C19 9 17 15 14 18 C12 20 11 21 11 21" />
        </svg>
      </Slot>
      <Slot w="w-[85px]">
        <svg width="38" height="32" viewBox="0 0 38 32">
          <g fill="#e8e8f0"><rect x="17" y="0" width="4" height="4" /><rect x="12" y="5" width="4" height="4" /><rect x="17" y="5" width="4" height="4" /><rect x="7" y="10" width="4" height="4" /><rect x="12" y="10" width="4" height="4" /><rect x="17" y="10" width="4" height="4" /></g>
          <path d="M0 16 H23 Q19 20 18 26 Q15 30 10 29 Q1 28 0 16Z" fill="#e8e8f0" />
          <circle cx="27" cy="21" r="9.5" fill="#1a1f4f" stroke="#e8e8f0" strokeWidth="2.4" />
          <rect x="25.7" y="15" width="2.8" height="8" fill="#e8e8f0" /><rect x="25.7" y="24.5" width="2.8" height="2.8" fill="#e8e8f0" />
        </svg>
      </Slot>
      <Slot w="w-[83px]">
        <svg width="32" height="32" viewBox="0 0 32 32">
          <path d="M4 13 V1 H27 V13" fill="none" stroke="#fff" strokeWidth="2" />
          <path d="M8 6 H24 M8 9 H24" stroke="#fff" strokeWidth="1.5" />
          <rect x="0" y="13" width="32" height="19" rx="3" fill="#fff" />
          <g fill="#1a1f4f"><circle cx="5" cy="18" r="1.5" /><circle cx="10" cy="18" r="1.5" /><circle cx="16" cy="18" r="1.5" /><circle cx="22" cy="18" r="1.5" /><circle cx="27" cy="18" r="1.5" /><circle cx="7" cy="23" r="1.5" /><circle cx="13" cy="23" r="1.5" /><circle cx="19" cy="23" r="1.5" /><circle cx="25" cy="23" r="1.5" /><rect x="10" y="26.5" width="12" height="2" /></g>
        </svg>
      </Slot>
      <Slot w="w-[83px]">
        <svg width="44" height="32" viewBox="0 0 44 32">
          <circle cx="16" cy="15" r="15" fill="#c4d0cc" />
          <path d="M2 12 Q12 3 20 7 Q16 10 14 14Z" fill="#4a9a58" />
          <path d="M20 1 Q24 14 18 30 Q26 24 29 14 Q28 5 20 1Z" fill="#5a90b8" />
          <circle cx="32" cy="20" r="10.5" fill="#b83222" stroke="#fff" strokeWidth="2" />
          <path d="M28 16 L36 24 M36 16 L28 24" stroke="#fff" strokeWidth="2.6" />
        </svg>
      </Slot>
      <Slot w="w-[70px]">
        <div className="flex h-[32px] w-[32px] items-center justify-center rounded-[4px] bg-[#e8e8f0] text-[24px] leading-none text-[#1a1f4f]">A</div>
      </Slot>
      <div className="w-[80px] shrink-0 text-[21px] text-[#d8d8e4]">Romaji</div>
      <Slot w="w-[85px]">
        <svg width="52" height="24" viewBox="0 0 52 24">
          <rect x="1" y="1" width="45" height="22" rx="6" fill="none" stroke="#8a8ea8" strokeWidth="2" /><rect x="4" y="4" width="19" height="16" rx="3" fill="#e8e8f0" /><polygon points="48,8 51,12 48,16" fill="#8a8ea8" />
        </svg>
      </Slot>
      <Slot w="w-[73px]"><Wifi size={34} color="#f0f0f4" strokeWidth={3} /></Slot>
      <Slot w="w-[67px]">
        <svg width="28" height="28" viewBox="0 0 28 28" fill="none">
          <circle cx="14" cy="14" r="12.5" stroke="#e8e8f0" strokeWidth="2.4" />
          <circle cx="14" cy="11" r="4.6" fill="#e8e8f0" /><path d="M5 23 Q14 12 23 23 Q14 30 5 23Z" fill="#e8e8f0" />
        </svg>
      </Slot>
      <Slot w="w-[68px]"><History size={30} color="#f0f0f4" strokeWidth={2.4} /></Slot>
      <Slot w="w-[69px]"><Search size={30} color="#f0f0f4" strokeWidth={2.5} /></Slot>
      <Slot w="w-[65px]">
        <svg width="30" height="28" viewBox="0 0 30 28">
          <rect x="1.5" y="1.5" width="27" height="11" rx="5.5" fill="none" stroke="#e8e8f0" strokeWidth="2.4" /><circle cx="8" cy="7" r="3.5" fill="#e8e8f0" />
          <rect x="0.5" y="15" width="29" height="13" rx="6.5" fill="#e8e8f0" /><circle cx="22" cy="21.5" r="4" fill="#1a1f4f" />
        </svg>
      </Slot>
      <Slot w="w-[56px]">
        <svg width="28" height="28" viewBox="0 0 28 28">
          <defs>
            <radialGradient id="siri"><stop offset="0" stopColor="#6a8ac8" /><stop offset="0.6" stopColor="#8a4a90" /><stop offset="1" stopColor="#2a3050" /></radialGradient>
          </defs>
          <circle cx="14" cy="14" r="14" fill="url(#siri)" />
          <path d="M14 14 L6 7 M14 14 L5 21 M14 14 L23 9" stroke="#dff0ff" strokeWidth="2" strokeLinecap="round" />
          <path d="M14 14 L21 22 M14 14 L12 25" stroke="#e070c0" strokeWidth="2" strokeLinecap="round" />
          <path d="M14 14 L15 4" stroke="#60d0d8" strokeWidth="2" strokeLinecap="round" />
        </svg>
      </Slot>
      <span className="ml-[19px] whitespace-pre pr-[36px] text-[26.5px]">Sun Aug 8  14:23</span>
    </div>
  );
}

export default function App() {
  return (
    <div className="relative h-[1800px] w-[2880px] overflow-hidden bg-[#c8c8c8] font-['Noto_Sans','Noto_Sans_CJK_JP',sans-serif]">
      <MenuBar />
      <div className="h-[2px] bg-[#1c1c1c]" />
      <div className="flex h-[1750px]">
        <div className="flex w-[12px] shrink-0 flex-col">
          <div className="h-[160px] bg-[#2c2c2e]" />
          <div className="flex-1 bg-[#c4c4c4]" />
        </div>
        <div className="flex w-[2868px] shrink-0 flex-col overflow-hidden rounded-t-[14px]">
          {/* title */}
          <div className="flex h-[56px] shrink-0 items-center bg-[#d2d2d2]">
            <div className="ml-[16px] flex h-[24px] w-[24px] items-center justify-center rounded-full bg-[#ed6a5e]"><div className="h-[8px] w-[8px] rounded-full bg-[#5a0f0a]" /></div>
            <div className="ml-[16px] h-[24px] w-[24px] rounded-full bg-[#f5bf4f]" />
            <div className="ml-[16px] h-[24px] w-[24px] rounded-full bg-[#61c554]" />
            <div className="flex-1 -translate-y-[1px] pr-[1178px] text-right text-[26px] font-bold whitespace-pre text-[#2a2a2a]">MYOG遺伝子座.dna  (Linear / 2884 bp)</div>
          </div>
          {/* toolbar */}
          <div className="flex h-[116px] shrink-0 items-start border-b-2 border-[#8a8a8a] bg-gradient-to-b from-[#e3e3e3] to-[#cfcfcf] pl-[28px] pt-[8px]">
            <ToolItem label="New" caret icon={
              <svg width="48" height="60" viewBox="0 0 48 60">
                <defs><linearGradient id="pg" x1="0" y1="0" x2="1" y2="1"><stop offset="0" stopColor="#fff" /><stop offset="1" stopColor="#dfe6f4" /></linearGradient></defs>
                <path d="M1 1 H33 L47 15 V59 H1Z" fill="url(#pg)" stroke="#9a9fb0" strokeWidth="1.5" /><path d="M33 1 V15 H47" fill="#e8edf5" stroke="#9a9fb0" strokeWidth="1.5" />
              </svg>} />
            <ToolItem label="Open" caret className="ml-[29px]" icon={
              <svg width="60" height="46" viewBox="0 0 60 46">
                <defs><linearGradient id="fg" x1="0" y1="0" x2="0" y2="1"><stop offset="0" stopColor="#a8d4f4" /><stop offset="1" stopColor="#5fa8dc" /></linearGradient></defs>
                <path d="M1 6 H18 L23 11 H46 V20 H14 L4 44 H1Z" fill="#9fcdef" stroke="#6aa4d0" />
                <path d="M14 20 H59 L47 45 H2Z" fill="url(#fg)" stroke="#5a96c4" />
                <path d="M42 12 Q44 2 52 3 L54 0 V12 H46 L49 8 Q46 7 42 12Z" fill="#3a6488" />
              </svg>} />
            <ToolItem label="Save" caret className="ml-[31px]" icon={
              <svg width="56" height="56" viewBox="0 0 56 56">
                <path d="M1 1 H55 V55 H6 L1 50Z" fill="#7a68b8" />
                <rect x="9" y="1" width="38" height="30" fill="#fafafa" />
                <g stroke="#bbb" strokeWidth="1"><line x1="11" y1="8" x2="45" y2="8" /><line x1="11" y1="14" x2="45" y2="14" /><line x1="11" y1="20" x2="45" y2="20" /><line x1="11" y1="26" x2="45" y2="26" /></g>
                <rect x="12" y="37" width="32" height="18" fill="#dcdcdc" /><rect x="18" y="40" width="8" height="15" fill="#6a5aa8" />
              </svg>} />
            <ToolItem label="Print" className="ml-[18px]" icon={
              <svg width="56" height="60" viewBox="0 0 56 60">
                <rect x="14" y="1" width="28" height="22" fill="#fff" stroke="#aaa" />
                <path d="M1 18 H55 V47 H1Z" fill="#c8c8c8" stroke="#888" /><rect x="1" y="34" width="54" height="13" fill="#8a8a8a" />
                <rect x="46" y="24" width="5" height="3" fill="#555" /><rect x="46" y="29" width="5" height="3" fill="#2ac840" />
                <rect x="15" y="40" width="26" height="20" fill="#bfe0f8" stroke="#6aa4d0" /><path d="M16 58 L24 46 L30 54 L35 48 L40 58Z" fill="#5f9fd8" />
              </svg>} />
            <ToolItem label="Undo" className="ml-[52px]" icon={
              <svg width="60" height="32" viewBox="0 0 60 32">
                <defs><linearGradient id="ug" x1="0" y1="0" x2="0" y2="1"><stop offset="0" stopColor="#4e8ad8" /><stop offset="1" stopColor="#2f6ec0" /></linearGradient></defs>
                <path d="M1 5 L9 12 Q32 -8 59 24 Q36 6 20 18 L30 31 H1Z" fill="url(#ug)" />
              </svg>} />
            <ToolItem label="Redo" muted className="ml-[7px]" icon={
              <svg width="60" height="32" viewBox="0 0 60 32"><path d="M59 5 L51 12 Q28 -8 1 24 Q24 6 40 18 L30 31 H59Z" fill="#a9c0da" /></svg>} />
            <ToolItem label="Copy" className="ml-[55px]" icon={
              <svg width="40" height="40" viewBox="0 0 40 40"><circle cx="20" cy="20" r="17" fill="none" stroke="#7ea6d8" strokeWidth="5" /></svg>} />
            <div className="flex-1" />
            <div className="mt-[-5px] flex h-[109px] w-[625px] shrink-0 items-start rounded-[22px] border-2 border-black bg-[#d2fad0] pl-[19px] pt-[10px]">
              <div className="mt-[17px] shrink-0"><Cca /></div>
              <div className="ml-[25px] text-[25.8px] leading-[32px] text-black">
                Alignments created with <span className="text-[#0a66cc]">SnapGene</span> can<br />now be seen in SnapGene Viewer.
              </div>
            </div>
            <div className="ml-[2px] mr-[25px] flex w-[90px] shrink-0 flex-col items-center">
              <svg width="66" height="62" viewBox="0 0 66 62">
                <path d="M2 2 H9 L18 44 H56" fill="none" stroke="#888" strokeWidth="2.5" />
                <rect x="1" y="0" width="10" height="6" fill="#3db010" />
                <path d="M13 9 H64 L60 38 H18Z" fill="#3a9a10" />
                <g stroke="#d4f0c0" strokeWidth="2"><line x1="17" y1="18" x2="61" y2="18" /><line x1="18" y1="26" x2="60" y2="26" /><line x1="19" y1="33" x2="59" y2="33" /></g>
                <circle cx="24" cy="54" r="6" fill="#333" stroke="#ccc" strokeWidth="2" /><circle cx="52" cy="54" r="6" fill="#333" stroke="#ccc" strokeWidth="2" />
              </svg>
              <div className="mt-[7px] text-[24px] leading-[30px] text-black">Order</div>
            </div>
          </div>
          {/* status */}
          <div className="flex h-[45px] shrink-0 items-center justify-between border-b-2 border-[#bdbdbd] bg-gradient-to-b from-[#fdfdfd] to-[#eeeeee] pl-[16px] pr-[16px] pt-[4px] text-[24px] text-black">
            <span className="whitespace-pre">Insertion Point:  160</span>
            <span className="flex items-center">
              <span className="mr-[13px] flex w-[24px] flex-col gap-[3px]"><span className="h-[3px] bg-black" /><span className="h-[3px] bg-black" /></span>
              2884 bp
            </span>
          </div>
          {/* main */}
          <div className="flex h-[1471px] shrink-0">
            <div className="flex w-[2085px] shrink-0 flex-col">
              <div className="flex h-[1406px] shrink-0">
                <LeftTools />
                <div className="flex w-[2004px] shrink-0 flex-col">
                  <Overview />
                  <Ruler />
                  <div className="flex flex-1 overflow-hidden">
                    <Canvas />
                    <div className="w-[32px] shrink-0 bg-[#f5f5f5] pl-[9px] pt-[33px]">
                      <div className="relative h-[105px] w-[16px] rounded-full bg-[#c4c4c4]">
                        <div className="absolute left-[-8px] top-[29px] h-[10px] w-[26px] border border-[#b8b800] bg-[#e8e860]" />
                      </div>
                    </div>
                  </div>
                </div>
              </div>
              <FindBar />
            </div>
            <RightPanel />
          </div>
          <BottomBar />
        </div>
      </div>
      <FeaturesMenu />
    </div>
  );
}
